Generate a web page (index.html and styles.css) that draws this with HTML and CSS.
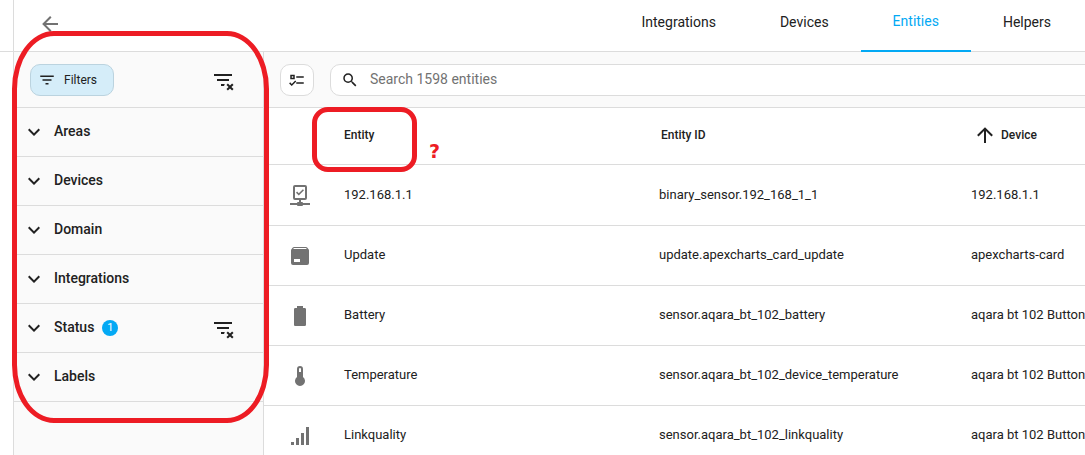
FILE: index.html
```html
<!DOCTYPE html>
<html lang="en">
<head>
<meta charset="utf-8">
<title>Entities</title>
<link rel="stylesheet" href="styles.css">
</head>
<body>
<svg class="sprite" aria-hidden="true">
  <symbol id="back" viewBox="0 0 24 24"><path d="M20,11V13H8L13.5,18.5L12.08,19.92L4.16,12L12.08,4.08L13.5,5.5L8,11H20Z"/></symbol>
  <symbol id="filter" viewBox="0 0 24 24"><path d="M6,13H18V11H6M3,6V8H21V6M10,18H14V16H10V18Z"/></symbol>
  <symbol id="filter-remove" viewBox="0 0 24 24"><path d="M21 8H3V6H21V8M13.81 16H10V18H13.09C13.21 17.28 13.46 16.61 13.81 16M18 11H6V13H18V11M21.12 15.46L19 17.59L16.88 15.46L15.47 16.88L17.59 19L15.47 21.12L16.88 22.54L19 20.41L21.12 22.54L22.54 21.12L20.41 19L22.54 16.88L21.12 15.46Z"/></symbol>
  <symbol id="chevron" viewBox="0 0 24 24"><path d="M7.41,8.58L12,13.17L16.59,8.58L18,10L12,16L6,10L7.41,8.58Z"/></symbol>
  <symbol id="checks" viewBox="0 0 24 24"><path d="M3,5H9V11H3V5M5,7V9H7V7H5M11,7H21V9H11V7M11,15H21V17H11V15M5,20L1.5,16.5L2.91,15.09L5,17.17L9.59,12.59L11,14L5,20Z"/></symbol>
  <symbol id="magnify" viewBox="0 0 24 24"><path d="M9.5,3A6.5,6.5 0 0,1 16,9.5C16,11.11 15.41,12.59 14.44,13.73L14.71,14H15.5L20.5,19L19,20.5L14,15.5V14.71L13.73,14.44C12.59,15.41 11.11,16 9.5,16A6.5,6.5 0 0,1 3,9.5A6.5,6.5 0 0,1 9.5,3M9.5,5C7,5 5,7 5,9.5C5,12 7,14 9.5,14C12,14 14,12 14,9.5C14,7 12,5 9.5,5Z"/></symbol>
  <symbol id="up" viewBox="0 0 24 24"><path d="M13,20H11V8L5.5,13.5L4.08,12.08L12,4.16L19.92,12.08L18.5,13.5L13,8V20Z"/></symbol>
  <symbol id="network" viewBox="0 0 24 24"><path d="M15,20A1,1 0 0,0 14,19H13V17H17A2,2 0 0,0 19,15V4A2,2 0 0,0 17,2H7A2,2 0 0,0 5,4V15A2,2 0 0,0 7,17H11V19H10A1,1 0 0,0 9,20H2V22H9A1,1 0 0,0 10,23H14A1,1 0 0,0 15,22H22V20H15M7,15V4H17V15H7M10.8,12.5L8,9.7L9.1,8.6L10.8,10.3L14.9,6.2L16,7.3L10.8,12.5Z"/></symbol>
  <symbol id="package" viewBox="0 0 24 24"><path d="M5.12,5H18.87L17.93,4H5.93L5.12,5M20.54,5.23C20.83,5.57 21,6 21,6.5V19A2,2 0 0,1 19,21H5A2,2 0 0,1 3,19V6.5C3,6 3.17,5.57 3.46,5.23L4.84,3.55C5.12,3.21 5.53,3 6,3H18C18.47,3 18.88,3.21 19.15,3.55L20.54,5.23M6,18H12V15H6V18Z"/></symbol>
  <symbol id="battery" viewBox="0 0 24 24"><path d="M16.67,4H15V2H9V4H7.33A1.33,1.33 0 0,0 6,5.33V20.67C6,21.4 6.6,22 7.33,22H16.67A1.33,1.33 0 0,0 18,20.67V5.33C18,4.6 17.4,4 16.67,4Z"/></symbol>
  <symbol id="thermometer" viewBox="0 0 24 24"><path d="M15 13V5A3 3 0 0 0 9 5V13A5 5 0 1 0 15 13M12 4A1 1 0 0 1 13 5V8H11V5A1 1 0 0 1 12 4Z"/></symbol>
  <symbol id="signal" viewBox="0 0 24 24"><path d="M3,21H6V18H3M8,21H11V14H8M13,21H16V9H13M18,21H21V3H18V21Z"/></symbol>
</svg>

<div class="app">
  <header class="header">
    <button class="icon-button back" aria-label="Back"><svg class="icon"><use href="#back"/></svg></button>
    <nav class="tabs">
      <a class="tab" href="#integrations">Integrations</a>
      <a class="tab" href="#devices">Devices</a>
      <a class="tab active" href="#entities" aria-current="page">Entities</a>
      <a class="tab" href="#helpers">Helpers</a>
    </nav>
  </header>

  <div class="body">
    <aside class="filters">
      <div class="filters-head">
        <button class="chip"><svg class="icon small"><use href="#filter"/></svg>Filters</button>
        <button class="icon-button clear" aria-label="Clear filters"><svg class="icon"><use href="#filter-remove"/></svg></button>
      </div>
      <div class="section"><button class="expand"><svg class="icon"><use href="#chevron"/></svg><span class="label">Areas</span></button></div>
      <div class="section"><button class="expand"><svg class="icon"><use href="#chevron"/></svg><span class="label">Devices</span></button></div>
      <div class="section"><button class="expand"><svg class="icon"><use href="#chevron"/></svg><span class="label">Domain</span></button></div>
      <div class="section"><button class="expand"><svg class="icon"><use href="#chevron"/></svg><span class="label">Integrations</span></button></div>
      <div class="section">
        <button class="expand"><svg class="icon"><use href="#chevron"/></svg><span class="label">Status</span><span class="badge">1</span></button>
        <button class="icon-button clear" aria-label="Clear status filter"><svg class="icon"><use href="#filter-remove"/></svg></button>
      </div>
      <div class="section"><button class="expand"><svg class="icon"><use href="#chevron"/></svg><span class="label">Labels</span></button></div>
    </aside>

    <main class="content">
      <div class="toolbar">
        <button class="select-mode" aria-label="Enter selection mode"><svg class="icon small"><use href="#checks"/></svg></button>
        <label class="search">
          <svg class="icon small"><use href="#magnify"/></svg>
          <input type="text" placeholder="Search 1598 entities" aria-label="Search 1598 entities">
        </label>
      </div>
      <table class="table">
        <colgroup><col class="col-icon"><col class="col-name"><col class="col-id"><col></colgroup>
        <thead>
          <tr><th></th><th>Entity</th><th>Entity ID</th><th><span class="sorted"><svg class="icon"><use href="#up"/></svg>Device</span></th></tr>
        </thead>
        <tbody>
          <tr><td class="cell-icon"><svg class="icon"><use href="#network"/></svg></td><td>192.168.1.1</td><td>binary_sensor.192_168_1_1</td><td>192.168.1.1</td></tr>
          <tr><td class="cell-icon"><svg class="icon"><use href="#package"/></svg></td><td>Update</td><td>update.apexcharts_card_update</td><td>apexcharts-card</td></tr>
          <tr><td class="cell-icon"><svg class="icon"><use href="#battery"/></svg></td><td>Battery</td><td>sensor.aqara_bt_102_battery</td><td>aqara bt 102 Button</td></tr>
          <tr><td class="cell-icon"><svg class="icon"><use href="#thermometer"/></svg></td><td>Temperature</td><td>sensor.aqara_bt_102_device_temperature</td><td>aqara bt 102 Button</td></tr>
          <tr><td class="cell-icon"><svg class="icon"><use href="#signal"/></svg></td><td>Linkquality</td><td>sensor.aqara_bt_102_linkquality</td><td>aqara bt 102 Button</td></tr>
        </tbody>
      </table>
    </main>
  </div>

  <div class="mark mark-filters"></div>
  <div class="mark mark-entity"></div>
  <span class="mark-question">?</span>
</div>
</body>
</html>
```
FILE: styles.css
```css
* { box-sizing: border-box; }

body {
  margin: 0;
  background: #fff;
  color: #212121;
  font-family: Roboto, "Liberation Sans", sans-serif;
  font-size: 14px;
}

button, input {
  margin: 0;
  padding: 0;
  border: 0;
  background: none;
  color: inherit;
  font: inherit;
}

.sprite { display: none; }
.icon { display: block; flex: none; width: 24px; height: 24px; fill: currentColor; }
.icon.small { width: 18px; height: 18px; }

.app {
  position: relative;
  display: flex;
  flex-direction: column;
  height: 100vh;
  padding-left: 13px;
  overflow: hidden;
  background: linear-gradient(#dcdcdc, #dcdcdc) 0 51px / 13px 1px no-repeat;
}

.header {
  display: flex;
  flex: none;
  height: 52px;
  border-left: 1px solid #dcdcdc;
  box-shadow: inset 0 -1px #dcdcdc;
}
.back { margin: 0 auto 4px 24px; color: #727272; }

.tabs { display: flex; padding-right: 2px; }
.tab {
  display: flex;
  align-items: center;
  padding: 0 32px 8px;
  color: #212121;
  text-decoration: none;
}
.tab.active { border-bottom: 2px solid #03a9f4; color: #03a9f4; }

.body { display: flex; flex: 1; min-height: 0; }

.filters {
  flex: none;
  width: 251px;
  border: solid #dcdcdc;
  border-width: 0 1px;
  background: #fafafa;
}
.filters-head {
  display: flex;
  align-items: center;
  justify-content: space-between;
  height: 56px;
  padding: 0 28px 0 16px;
  border-bottom: 1px solid #dcdcdc;
}
.chip {
  display: flex;
  align-items: center;
  gap: 8px;
  height: 32px;
  padding: 0 16px 0 7px;
  border: 1px solid #bbd3df;
  border-radius: 10px;
  background: #d5edf9;
  font-size: 12px;
}

.section {
  display: flex;
  align-items: center;
  height: 49px;
  padding: 0 28px 0 8px;
  border-bottom: 1px solid #dcdcdc;
}
.expand {
  display: flex;
  flex: 1;
  align-items: center;
  gap: 8px;
  height: 100%;
  font-weight: 500;
}
.label { padding-bottom: 2px; }
.badge {
  width: 16px;
  height: 16px;
  border-radius: 50%;
  background: #03a9f4;
  color: #fff;
  font-size: 11px;
  font-weight: 400;
  line-height: 16px;
}

.content { flex: 1; min-width: 0; overflow: hidden; }
.toolbar {
  display: flex;
  align-items: center;
  gap: 16px;
  height: 56px;
  padding-left: 16px;
  border-bottom: 1px solid #dcdcdc;
  background: #fafafa;
  overflow: hidden;
}
.select-mode, .search {
  display: flex;
  align-items: center;
  height: 32px;
  border: 1px solid #dcdcdc;
  border-radius: 10px;
  background: #fff;
}
.select-mode { flex: none; justify-content: center; width: 34px; }
.search { flex: 1 0 800px; gap: 11px; padding-left: 10px; }
.search input { flex: 1; padding-bottom: 2px; outline: 0; }
.search input::placeholder { color: #727272; opacity: 1; }

.table {
  width: 100%;
  border-collapse: separate;
  border-spacing: 0;
  table-layout: fixed;
}
.col-icon { width: 66px; }
.col-name { width: 315px; }
.col-id { width: 312px; }
.table th, .table td {
  padding: 0 0 2px 14px;
  text-align: left;
  white-space: nowrap;
}
.table th {
  height: 57px;
  border-bottom: 1px solid #dcdcdc;
  font-size: 12px;
  font-weight: 500;
}
.table th:nth-child(n + 3) { padding-left: 16px; }
.table td { height: 60px; font-size: 13px; }
.table tbody tr + tr td { border-top: 1px solid #dcdcdc; }
.table .cell-icon { padding: 0 0 0 24px; color: #727272; }
.sorted { display: flex; align-items: center; gap: 4px; }

.mark { position: absolute; border: 5px solid #ed1c24; pointer-events: none; }
.mark-filters { left: 12px; top: 31px; width: 257px; height: 392px; border-radius: 42px / 58px; }
.mark-entity { left: 312px; top: 107px; width: 105px; height: 65px; border-radius: 16px; }
.mark-question {
  position: absolute;
  left: 429px;
  top: 140px;
  color: #ed1c24;
  font-family: "DejaVu Sans", sans-serif;
  font-size: 19px;
  font-weight: 700;
  line-height: 22px;
}
```
